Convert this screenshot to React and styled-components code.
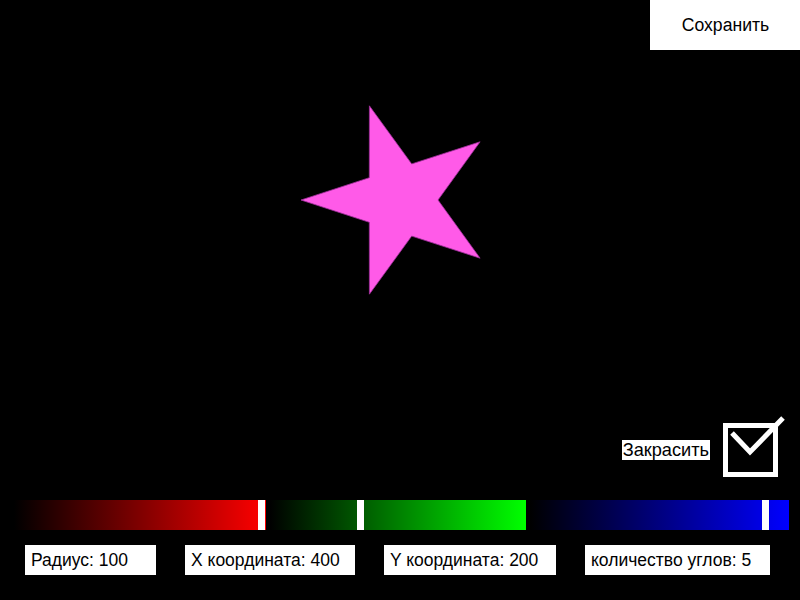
import React from "react";
import styled, { createGlobalStyle } from "styled-components";

const GlobalStyle = createGlobalStyle`
  html, body {
    margin: 0;
    padding: 0;
    background: #000;
  }
  body {
    font-family: "Liberation Sans", Arial, sans-serif;
  }
`;

const Page = styled.div`
  width: 800px;
  height: 600px;
  background: #000;
  display: flex;
  flex-direction: column;
  overflow: hidden;
`;

const Header = styled.header`
  display: flex;
  justify-content: flex-end;
  height: 50px;
`;

const SaveButton = styled.button`
  width: 150px;
  height: 50px;
  border: 0;
  margin: 0;
  padding: 0 0 0 1px;
  background: #fff;
  color: #000;
  font-family: "Liberation Sans", Arial, sans-serif;
  font-size: 17.6px;
  cursor: pointer;
`;

const Stage = styled.section`
  height: 366px;
  display: flex;
  justify-content: center;
`;

const FillRow = styled.div`
  height: 64px;
  display: flex;
  justify-content: flex-end;
  align-items: center;
  gap: 10px;
  padding-right: 14px;
`;

const FillLabel = styled.span`
  background: #fff;
  color: #000;
  font-size: 18.2px;
  line-height: 20px;
  height: 20px;
  padding: 0 1px;
  margin-top: 4px;
`;

const Sliders = styled.div`
  display: flex;
  gap: 4px;
  padding-left: 14px;
  margin-top: 20px;
  height: 30px;
`;

const Track = styled.div`
  position: relative;
  width: ${(p) => p.$w}px;
  height: 30px;
  background: linear-gradient(to right, #000, ${(p) => p.$color});
`;

const Thumb = styled.div`
  position: absolute;
  top: 0;
  width: 7px;
  height: 30px;
  background: #fff;
`;

const Labels = styled.div`
  display: flex;
  gap: 29px;
  padding-left: 25px;
  margin-top: 15px;
`;

const InfoBox = styled.div`
  width: ${(p) => p.$w}px;
  height: 30px;
  box-sizing: border-box;
  padding-left: 6px;
  background: #fff;
  color: #000;
  font-size: 17.5px;
  line-height: 30px;
  white-space: nowrap;
`;

function starPoints(cx, cy, R, r, n) {
  const pts = [];
  for (let i = 0; i < n * 2; i++) {
    const rad = i % 2 === 0 ? R : r;
    const a = Math.PI + (i * Math.PI) / n;
    pts.push(`${(cx + rad * Math.cos(a)).toFixed(1)},${(cy + rad * Math.sin(a)).toFixed(1)}`);
  }
  return pts.join(" ");
}

const CheckBoxIcon = () => (
  <svg width="66" height="64" viewBox="0 0 66 64">
    <rect x="5.5" y="9.5" width="50" height="49" fill="none" stroke="#fff" strokeWidth="5" />
    <polyline points="12,17 30,36 63,2" fill="none" stroke="#fff" strokeWidth="5" />
  </svg>
);

const sliders = [
  { color: "#ff0000", w: 252, thumb: 244 },
  { color: "#00ff00", w: 256, thumb: 87 },
  { color: "#0000ff", w: 259, thumb: 232 },
];

const infos = [
  { text: "Радиус: 100", w: 131 },
  { text: "X координата: 400", w: 170 },
  { text: "Y координата: 200", w: 172 },
  { text: "количество углов: 5", w: 185 },
];

export default function App() {
  return (
    <Page>
      <GlobalStyle />
      <Header>
        <SaveButton>Сохранить</SaveButton>
      </Header>
      <Stage>
        <svg width="800" height="366" viewBox="0 0 800 366">
          <polygon
            points={starPoints(400, 150, 99, 38, 5)}
            fill="#ff5ae8"
            stroke="#a0309a"
            strokeWidth="0.8"
          />
        </svg>
      </Stage>
      <FillRow>
        <FillLabel>Закрасить</FillLabel>
        <CheckBoxIcon />
      </FillRow>
      <Sliders>
        {sliders.map((s) => (
          <Track key={s.color} $w={s.w} $color={s.color}>
            <Thumb style={{ left: s.thumb }} />
          </Track>
        ))}
      </Sliders>
      <Labels>
        {infos.map((i) => (
          <InfoBox key={i.text} $w={i.w}>
            {i.text}
          </InfoBox>
        ))}
      </Labels>
    </Page>
  );
}
